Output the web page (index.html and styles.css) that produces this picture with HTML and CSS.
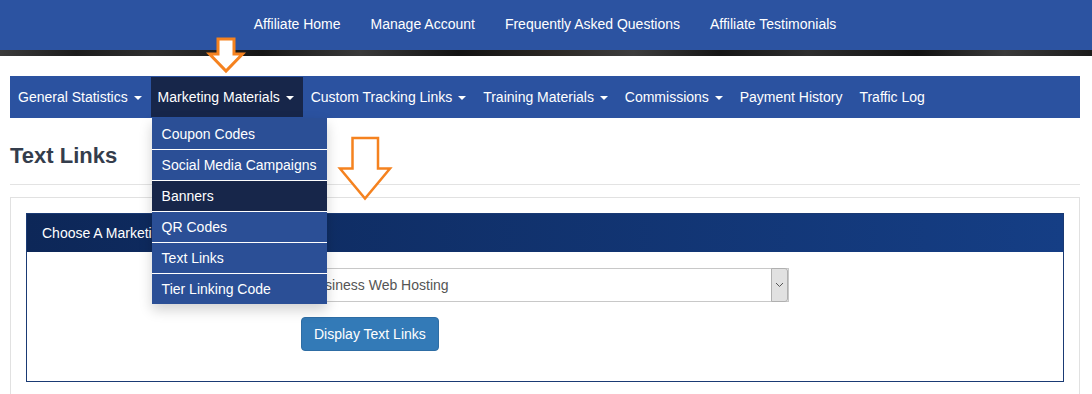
FILE: index.html
```html
<!DOCTYPE html>
<html lang="en">
<head>
    <meta charset="UTF-8">
    <meta name="viewport" content="width=device-width, initial-scale=1.0">
    <title>Affiliate Area - Text Links</title>
    <link rel="stylesheet" href="styles.css">
</head>
<body>

    <div class="topbar">
        <ul class="top-links">
            <li><a href="#">Affiliate Home</a></li>
            <li><a href="#">Manage Account</a></li>
            <li><a href="#">Frequently Asked Questions</a></li>
            <li><a href="#">Affiliate Testimonials</a></li>
        </ul>
    </div>
    <div class="photo-strip"></div>

    <div class="page">
        <nav class="main-nav">
            <ul class="nav-list">
                <li class="nav-item"><a href="#">General Statistics <span class="caret"></span></a></li>
                <li class="nav-item open">
                    <a href="#">Marketing Materials <span class="caret"></span></a>
                    <ul class="dropdown">
                        <li><a href="#">Coupon Codes</a></li>
                        <li><a href="#">Social Media Campaigns</a></li>
                        <li class="hover"><a href="#">Banners</a></li>
                        <li><a href="#">QR Codes</a></li>
                        <li><a href="#">Text Links</a></li>
                        <li><a href="#">Tier Linking Code</a></li>
                    </ul>
                </li>
                <li class="nav-item"><a href="#">Custom Tracking Links <span class="caret"></span></a></li>
                <li class="nav-item"><a href="#">Training Materials <span class="caret"></span></a></li>
                <li class="nav-item"><a href="#">Commissions <span class="caret"></span></a></li>
                <li class="nav-item"><a href="#">Payment History</a></li>
                <li class="nav-item"><a href="#">Traffic Log</a></li>
            </ul>
        </nav>

        <h3 class="page-title">Text Links</h3>
        <hr class="title-rule">

        <div class="outer-panel">
            <div class="panel">
                <div class="panel-heading">Choose A Marketing Campaign</div>
                <div class="panel-body">
                    <div class="form-col">
                        <div class="select-wrap">
                            <select class="campaign-select">
                                <option>Business Web Hosting</option>
                            </select>
                            <span class="select-arrow">
                                <svg width="9" height="6" viewBox="0 0 9 6"><path d="M1 1 L4.5 4.5 L8 1" fill="none" stroke="#555" stroke-width="1"/></svg>
                            </span>
                        </div>
                        <button class="btn-primary">Display Text Links</button>
                    </div>
                </div>
            </div>
        </div>
    </div>

    <!-- orange hint arrows drawn over the page -->
    <svg class="hint-arrow arrow-small" width="42" height="40" viewBox="0 0 42 40">
        <polygon points="13,4 29,4 29,19 37.5,19 21,36 4.5,19 13,19" fill="#fff" stroke="#f5821f" stroke-width="3" stroke-linejoin="miter"/>
    </svg>
    <svg class="hint-arrow arrow-large" width="60" height="70" viewBox="0 0 60 70">
        <polygon points="17.5,5 43,5 43,35.5 55,35.5 30,65.5 5,35.5 17.5,35.5" fill="#fff" stroke="#f5821f" stroke-width="2.5" stroke-linejoin="miter"/>
    </svg>

</body>
</html>
```

FILE: styles.css
```css
body {
    font-family: "Liberation Sans", Arial, sans-serif;
    font-size: 14px;
    margin: 0;
    padding: 0;
    background: #fff;
    color: #333;
    position: relative;
}

a {
    color: inherit;
    text-decoration: none;
}

ul {
    list-style: none;
    margin: 0;
    padding: 0;
}

/* top strip */
.topbar {
    background: #2c53a1;
    height: 50px;
}

.top-links {
    display: flex;
    justify-content: center;
    line-height: 48px;
    padding-right: 2px;
}

.top-links li {
    padding: 0 15px;
    color: #fff;
}

.photo-strip {
    height: 6px;
    background: linear-gradient(to right, #3b3b3b 0%, #1c1c1c 7%, #2f2f2f 14%, #161616 24%, #3a3a3a 33%, #121212 42%, #2a2622 50%, #3d3d3d 58%, #151515 66%, #2e2e2e 74%, #111 84%, #3a3a3a 92%, #1b1b1b 100%);
}

.page {
    margin: 20px 12px 0 10px;
}

/* main menu */
.main-nav {
    background: #2b52a0;
    height: 42px;
}

.nav-list {
    display: flex;
    height: 42px;
}

.nav-item {
    position: relative;
    margin: 1px 0;
}

.nav-item > a {
    display: block;
    line-height: 40px;
    padding: 0 9px 0 8px;
    color: #fff;
}

.nav-item.open > a {
    background: #17264a;
    padding-left: 7px;
}

.caret {
    display: inline-block;
    width: 0;
    height: 0;
    margin-left: 2px;
    vertical-align: middle;
    border-top: 4px solid #fff;
    border-left: 4px solid transparent;
    border-right: 4px solid transparent;
}

.dropdown {
    position: absolute;
    top: calc(100% + 1px);
    left: 1px;
    width: 175px;
    padding-top: 1px;
    background: #2b4f96;
    box-shadow: 0 6px 12px rgba(0, 0, 0, 0.18);
    z-index: 20;
}

.dropdown li {
    border-bottom: 1px solid #fff;
}

.dropdown li:last-child {
    border-bottom: none;
}

.dropdown a {
    display: block;
    line-height: 30px;
    padding: 0 10px;
    color: #fff;
    white-space: nowrap;
}

.dropdown li.hover a {
    background: #17264a;
}

/* title */
.page-title {
    font-size: 22px;
    line-height: 24px;
    font-weight: bold;
    color: #343d4c;
    margin: 26px 0 16px;
}

.title-rule {
    border: 0;
    border-top: 1px solid #e3e3e3;
    margin: 0 0 12px;
}

/* panels */
.outer-panel {
    border: 1px solid #e1e1e1;
    padding: 15px;
}

.panel {
    border: 1px solid #1a3a74;
    background: #fff;
}

.panel-heading {
    height: 38px;
    line-height: 38px;
    padding: 0 15px;
    color: #fff;
    background: linear-gradient(to right, #0d2758, #153e85);
}

.panel-body {
    padding: 16px 0 15px;
}

.form-col {
    margin-left: 25%;
    margin-bottom: 15px;
    width: 50%;
    padding: 0 15px;
    box-sizing: border-box;
}

.select-wrap {
    position: relative;
    height: 34px;
}

.campaign-select {
    -webkit-appearance: none;
    appearance: none;
    width: 100%;
    height: 34px;
    border: 1px solid #c8c8c8;
    border-radius: 0;
    background: #fff;
    padding: 0 6px;
    font-family: "Liberation Sans", Arial, sans-serif;
    font-size: 14px;
    color: #555;
}

.select-arrow {
    position: absolute;
    top: 0;
    right: 1px;
    width: 15px;
    height: 32px;
    border: 1px solid #b0b0b0;
    border-radius: 0 3px 3px 0;
    background: #e1e1e1;
    display: flex;
    align-items: center;
    justify-content: center;
    pointer-events: none;
}

.btn-primary {
    margin-top: 15px;
    padding: 6px 12px;
    font-family: "Liberation Sans", Arial, sans-serif;
    font-size: 14px;
    line-height: 20px;
    color: #fff;
    background: #337ab7;
    border: 1px solid #2e6da4;
    border-radius: 4px;
}

/* hint arrows */
.hint-arrow {
    position: absolute;
    z-index: 30;
}

.arrow-small {
    left: 205px;
    top: 35px;
}

.arrow-large {
    left: 335px;
    top: 133px;
}
```
